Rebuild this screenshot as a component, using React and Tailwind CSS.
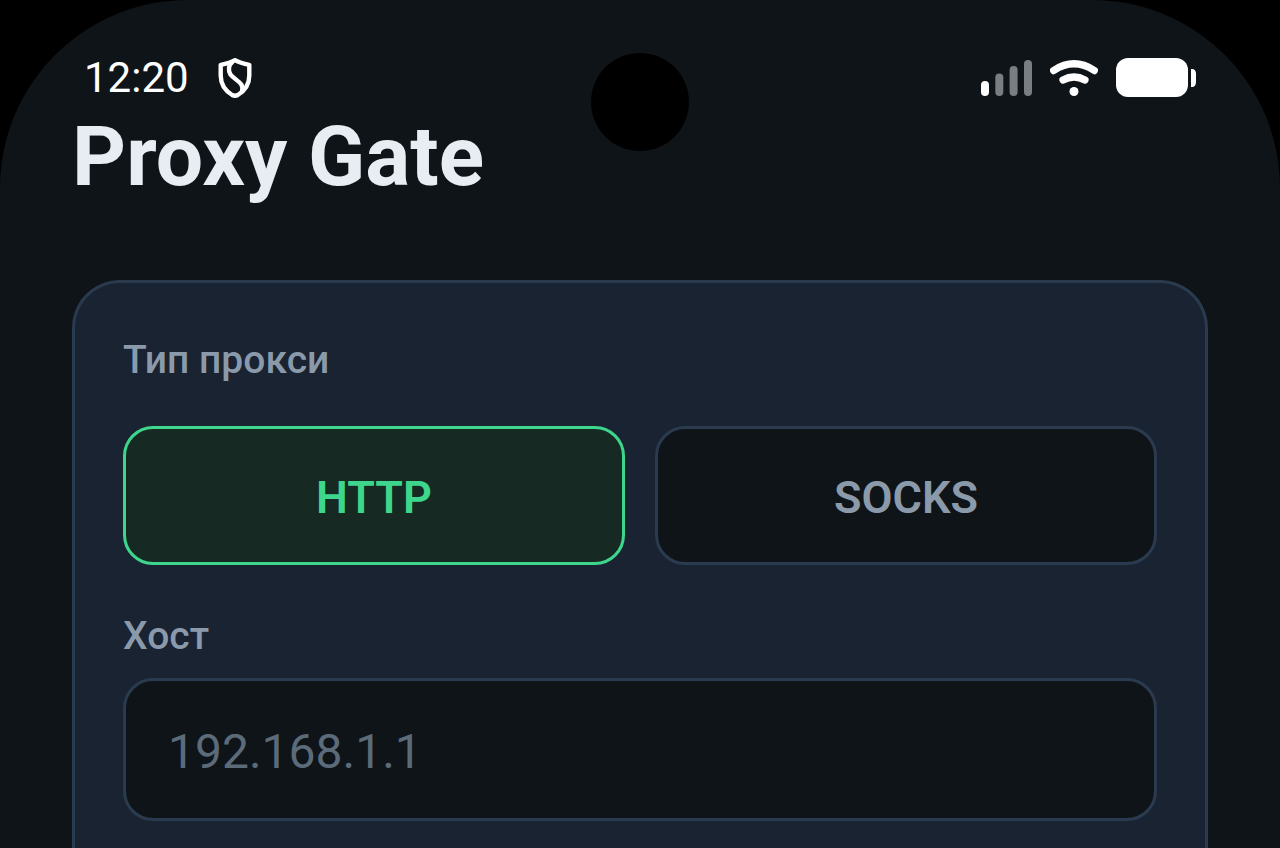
import { useState } from "react";

function ShieldIcon() {
  return (
    <svg viewBox="0 0 36 42" className="h-[42px] w-9" fill="none" stroke="white" strokeWidth="4.4" strokeLinejoin="round" strokeLinecap="round" aria-hidden="true">
      <path d="M18 3.200C14 5.600 9 6.900 3.700 7.800V18.500C3.700 28 9.500 34.500 15.200 38Q18 39.600 20.800 38C26.500 34.500 32.300 28 32.300 18.500V7.800C27 6.900 22 5.600 18 3.200Z" />
      <path d="M15 5.500C11.500 8 11 13.500 13.500 17.500C16 21 21.500 23.500 24.300 27.500C25.500 29.500 25.800 31.500 25 33.500" />
    </svg>
  );
}

function SignalIcon() {
  return (
    <svg viewBox="0 0 51 36" className="h-9 w-[51px]" fill="white" aria-hidden="true">
      <rect x="0" y="21" width="8" height="15" rx="4" />
      <g fill="#7b7e80">
        <rect x="14.300" y="13.500" width="8" height="22.500" rx="4" />
        <rect x="28.600" y="6" width="8" height="30" rx="4" />
        <rect x="43" y="0" width="8" height="36" rx="4" />
      </g>
    </svg>
  );
}

function WifiIcon() {
  return (
    <svg viewBox="0 0 48 36" className="h-9 w-12" fill="none" stroke="white" strokeLinecap="round" aria-hidden="true">
      <path d="M3.700 10.500Q24 -2.800 44.300 10.500" strokeWidth="7.400" />
      <path d="M13 20Q24 14 35 20" strokeWidth="7.200" />
      <circle cx="24" cy="31.500" r="4.500" fill="white" stroke="none" />
    </svg>
  );
}

function BatteryIcon() {
  return (
    <svg viewBox="0 0 80 39" className="h-[39px] w-20" fill="white" aria-hidden="true">
      <rect width="72" height="39" rx="12" />
      <path d="M75 11h1c2.500 0 4 2 4 4.500v8.500c0 3-1.500 5-4 5h-1Z" />
    </svg>
  );
}

function StatusBar() {
  return (
    <div className="flex h-[49px] items-center justify-between px-3">
      <div className="flex items-center gap-7">
        <span className="text-[42px] leading-[49px] text-white">12:20</span>
        <ShieldIcon />
      </div>
      <div className="flex items-center gap-[18px]">
        <SignalIcon />
        <WifiIcon />
        <BatteryIcon />
      </div>
    </div>
  );
}

const types = ["HTTP", "SOCKS"];

export default function App() {
  const [type, setType] = useState("HTTP");
  const [host, setHost] = useState("");

  return (
    <div className="min-h-screen bg-black font-['Roboto',sans-serif]">
      <div className="relative flex min-h-screen flex-col rounded-t-[188px] bg-[#0f1418] px-[72px] pt-[53px]">
        <div className="absolute top-[53px] left-1/2 size-[98px] -translate-x-1/2 rounded-full bg-black" />
        <StatusBar />
        <h1 className="mt-[6px] text-[84px] leading-[98px] font-bold text-[#e8edf4]">Proxy Gate</h1>

        <form className="mt-[74px] flex grow flex-col rounded-t-[48px] border-3 border-b-0 border-[#2a3a4f] bg-[#1a2332] px-12 pt-[54px]">
          <span id="type-label" className="text-[39px] leading-[46px] font-medium text-[#8b9aab]">
            Тип прокси
          </span>
          <div role="group" aria-labelledby="type-label" className="mt-[43px] grid grid-cols-2 gap-[30px]">
            {types.map((name) => (
              <button
                key={name}
                type="button"
                aria-pressed={type === name}
                onClick={() => setType(name)}
                className={
                  type === name
                    ? "h-[139px] rounded-[30px] border-3 border-[#3dd68c] bg-[#162923] pt-1 text-[45px] font-semibold text-[#3dd68c]"
                    : "h-[139px] rounded-[30px] border-3 border-[#2a3a4f] bg-[#0f1418] pt-1 text-[45px] font-semibold text-[#8b9aab]"
                }
              >
                {name}
              </button>
            ))}
          </div>
          <label htmlFor="host" className="mt-12 text-[39px] leading-[46px] font-medium text-[#8b9aab]">
            Хост
          </label>
          <input
            id="host"
            type="text"
            value={host}
            onChange={(e) => setHost(e.target.value)}
            placeholder="192.168.1.1"
            className="mt-[19px] h-[143px] w-full rounded-[30px] border-3 border-[#2a3a4f] bg-[#0f1418] px-[42px] pt-1 text-5xl text-[#e8edf4] outline-none placeholder:text-[#5c6b7a]"
          />
        </form>
      </div>
    </div>
  );
}
